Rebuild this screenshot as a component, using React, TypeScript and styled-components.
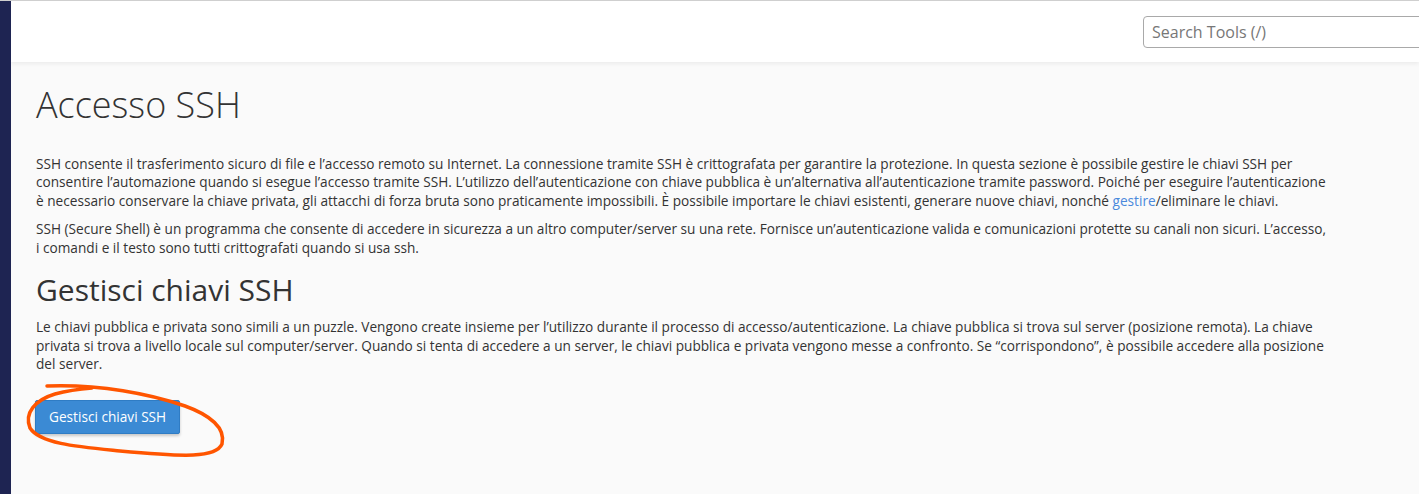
import React from 'react';
import styled, { createGlobalStyle } from 'styled-components';

const GlobalStyle = createGlobalStyle`
  * { box-sizing: border-box; }
  html, body {
    margin: 0;
    padding: 0;
    height: 100%;
  }
  body {
    font-family: "Open Sans", "Liberation Sans", sans-serif;
    font-size: 13.65px;
    line-height: 18.5px;
    color: #333;
    background: #fafafa;
  }
`;

const colors = {
  sidebar: '#1e2452',
  link: '#4a89dc',
  button: '#3b8ad4',
  annotation: '#ff5500',
};

const Page = styled.div`
  display: flex;
  min-height: 494px;
  border-top: 1px solid #cfcfcf;
`;

const Sidebar = styled.aside`
  width: 11px;
  flex: 0 0 11px;
  background: ${colors.sidebar};
`;

const Main = styled.main`
  flex: 1;
  display: flex;
  flex-direction: column;
  min-width: 0;
  overflow: hidden;
`;

const Header = styled.header`
  height: 61px;
  background: #fff;
  display: flex;
  align-items: center;
  justify-content: flex-end;
  box-shadow: 0 2px 4px rgba(0, 0, 0, 0.06);
  position: relative;
  z-index: 1;
`;

const SearchInput = styled.input`
  width: 300px;
  height: 32px;
  margin-right: -24px;
  padding: 0 8px;
  border: 1px solid #a9a9a9;
  border-radius: 4px;
  font-family: inherit;
  font-size: 16px;
  color: #555;
  background: #fff;

  &::placeholder {
    color: #777;
  }
`;

const Content = styled.section`
  padding: 23px 30px 0 25px;
  position: relative;
`;

const Title = styled.h1`
  margin: 0 0 30px;
  font-size: 36px;
  font-weight: 300;
  line-height: 1.1;
  color: #333;
`;

const SectionTitle = styled.h2`
  margin: 16px 0 12px;
  font-size: 30px;
  font-weight: 500;
  line-height: 1.1;
  color: #333;
`;

const Paragraph = styled.p`
  margin: 0 0 10px;
  white-space: nowrap;
`;

const Link = styled.a`
  color: ${colors.link};
  text-decoration: none;
`;

const Actions = styled.div`
  padding-top: 16px;
  position: relative;
`;

const PrimaryButton = styled.button`
  height: 34px;
  padding: 0 13px;
  margin-left: -1px;
  border: 1px solid #2f7cc4;
  border-radius: 2px;
  background: ${colors.button};
  color: #fff;
  font-family: inherit;
  font-size: 13.65px;
  box-shadow: 0 2px 3px rgba(0, 0, 0, 0.2);
  cursor: pointer;
`;

// hand-drawn marker circle around the button
const Annotation = styled.svg`
  position: absolute;
  left: -36px;
  top: -4px;
  width: 260px;
  height: 90px;
  overflow: visible;
  pointer-events: none;
`;

const App: React.FC = () => {
  return (
    <>
      <GlobalStyle />
      <Page>
        <Sidebar />
        <Main>
          <Header>
            <SearchInput placeholder="Search Tools (/)" />
          </Header>
          <Content>
            <Title>Accesso SSH</Title>
            <Paragraph>
              SSH consente il trasferimento sicuro di file e l’accesso remoto su Internet. La connessione tramite SSH è crittografata per garantire la protezione. In questa sezione è possibile gestire le chiavi SSH per
              <br />
              consentire l’automazione quando si esegue l’accesso tramite SSH. L’utilizzo dell’autenticazione con chiave pubblica è un’alternativa all’autenticazione tramite password. Poiché per eseguire l’autenticazione
              <br />
              è necessario conservare la chiave privata, gli attacchi di forza bruta sono praticamente impossibili. È possibile importare le chiavi esistenti, generare nuove chiavi, nonché{' '}
              <Link href="#">gestire</Link>/eliminare le chiavi.
            </Paragraph>
            <Paragraph>
              SSH (Secure Shell) è un programma che consente di accedere in sicurezza a un altro computer/server su una rete. Fornisce un’autenticazione valida e comunicazioni protette su canali non sicuri. L’accesso,
              <br />
              i comandi e il testo sono tutti crittografati quando si usa ssh.
            </Paragraph>
            <SectionTitle>Gestisci chiavi SSH</SectionTitle>
            <Paragraph>
              Le chiavi pubblica e privata sono simili a un puzzle. Vengono create insieme per l’utilizzo durante il processo di accesso/autenticazione. La chiave pubblica si trova sul server (posizione remota). La chiave
              <br />
              privata si trova a livello locale sul computer/server. Quando si tenta di accedere a un server, le chiavi pubblica e privata vengono messe a confronto. Se “corrispondono”, è possibile accedere alla posizione
              <br />
              del server.
            </Paragraph>
            <Actions>
              <PrimaryButton type="button">Gestisci chiavi SSH</PrimaryButton>
              <Annotation viewBox="0 0 260 90">
                <path
                  d="M47,6 C100,4 150,14 185,26 C210,35 226,48 222,64 C216,78 185,77 120,71 C80,67 40,64 30,48 C24,33 35,20 55,14 C70,10 80,9 92,8"
                  fill="none"
                  stroke={colors.annotation}
                  strokeWidth={3.5}
                  strokeLinecap="round"
                  strokeLinejoin="round"
                />
              </Annotation>
            </Actions>
          </Content>
        </Main>
      </Page>
    </>
  );
};

export default App;
